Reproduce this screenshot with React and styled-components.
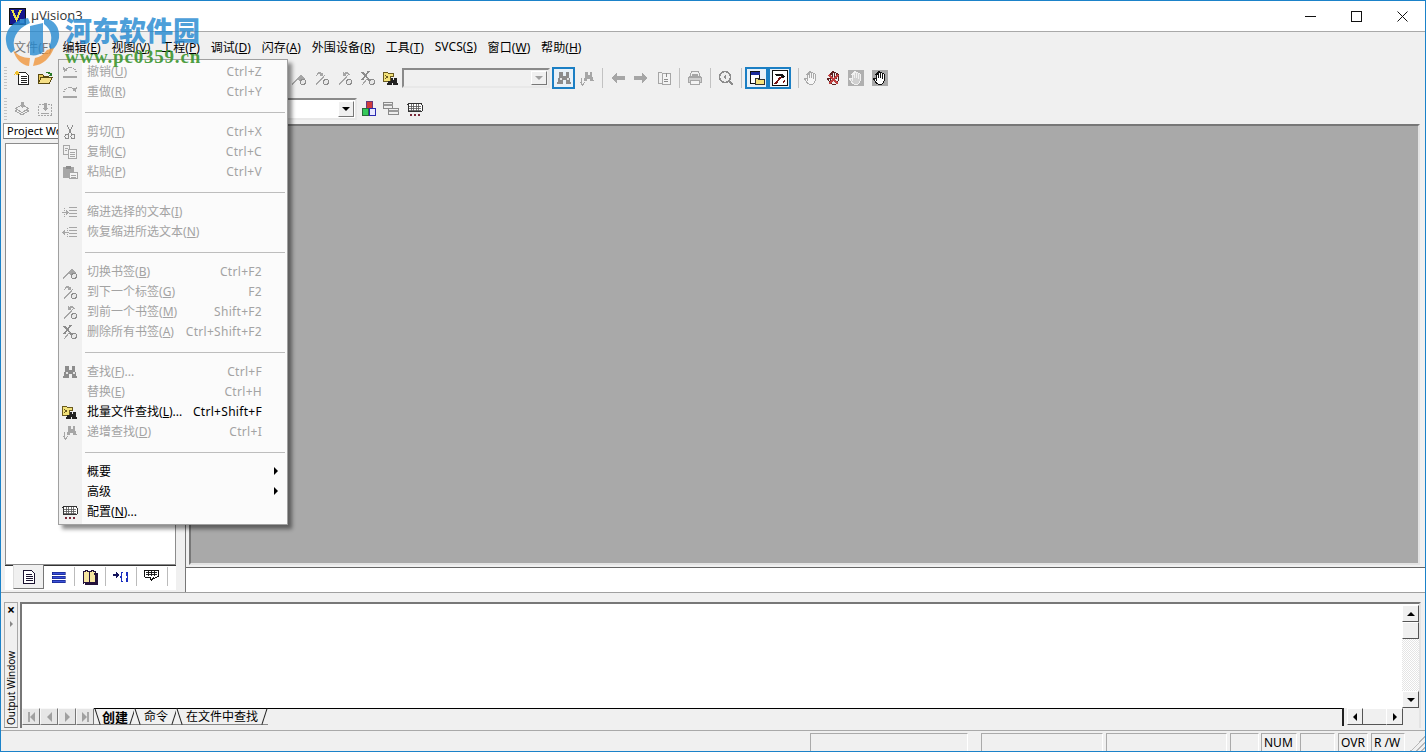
import React from "react";
import styled, { createGlobalStyle } from "styled-components";

const DIM = "#a6a6a6";
const DIM_DARK = "#8c8c8c";
const HAND = "M4 9V4.500a1 1 0 0 1 2 0V8 2.500a1 1 0 0 1 2 0V8 3a1 1 0 0 1 2 0v5.500-4.500a1 1 0 0 1 2 0v7c0 2-2 3.500-4 3.500-3 0-4-1.500-6-5-.6-1.200 1-2.200 2-.5z";

const GlobalStyle = createGlobalStyle`
  html, body { margin: 0; padding: 0; background: #f0f0f0; }
  * { box-sizing: border-box; }
  body { font-family: "Noto Sans", "Noto Sans CJK SC", sans-serif; font-size: 12px; color: #000; overflow: hidden; }
`;

/* ---------- little drawings, all on a 16x16 grid ---------- */
const GLYPHS = {
  newFile: (
    <>
      <path d="M4.500 2.500h7l2.500 2.500v9.500H4.500z" fill="#fff" stroke="#222" />
      <path d="M6.500 6.500h6M6.500 8.500h6M6.500 10.500h6M6.500 12.500h6" stroke="#222" />
      <path d="M3 0l.8 2 2-.5-1.300 1.600 1.300 1.600-2-.5-.8 2-.8-2-2 .5 1.300-1.600L.2 1.500l2 .5z" fill="#f2c230" />
    </>
  ),
  open: (
    <>
      <path d="M1.500 13.500v-9h4l1 1.500h5v2" fill="#e9c95c" stroke="#5a4a10" />
      <path d="M1.500 13.500l2.500-6h11l-2.500 6z" fill="#f5df86" stroke="#5a4a10" />
      <path d="M9 2.500c2-1.500 4-1 5 1l.8-1v3h-3l1-.8c-1-1.400-2.400-1.600-3.800-1.200z" fill="#2a7a2a" />
    </>
  ),
  stack: (
    <>
      <path d="M1.500 10l6.500-3.500 6.500 3.500-6.500 4z" fill="none" stroke={DIM} />
      <path d="M1.500 7.500l6.500-3.500 6.500 3.500-6.500 4z" fill="#f0f0f0" stroke={DIM} />
      <path d="M6.500.5h3v3h2L8 7 4.500 3.500h2z" fill={DIM} />
    </>
  ),
  boxIn: (
    <>
      <rect x="1.500" y="3.500" width="13" height="11" fill="none" stroke={DIM} strokeDasharray="2 1" />
      <path d="M6.500 1.500h3v5h2L8 10 4.500 6.500h2z" fill={DIM} />
      <path d="M4 12h8" stroke={DIM} />
    </>
  ),
  flag: (
    <>
      <path d="M1 15l9-10" stroke={DIM} strokeWidth="1.300" />
      <path d="M6 9l4-4 4 4-3 3z" fill={DIM} />
      <circle cx="12" cy="12" r="2.500" fill="#e8e8e8" stroke={DIM_DARK} />
    </>
  ),
  flagNext: (
    <>
      <path d="M2 15l9-10" stroke={DIM} strokeWidth="1.300" />
      <path d="M2 6c0-4 4-5 6-3l1-1v4H5l1.500-1.300c-1.300-1-3-.6-3.500.3z" fill={DIM} />
      <circle cx="12" cy="12" r="2.500" fill="#e8e8e8" stroke={DIM_DARK} />
    </>
  ),
  flagPrev: (
    <>
      <path d="M2 15l9-10" stroke={DIM} strokeWidth="1.300" />
      <path d="M13 6c0-4-4-5-6-3L6 2v4h4L8.500 4.700c1.300-1 3-.6 3.500.3z" fill={DIM} />
      <circle cx="12" cy="12" r="2.500" fill="#e8e8e8" stroke={DIM_DARK} />
    </>
  ),
  flagClear: (
    <>
      <path d="M2 2l8 9M9 1L2 10" stroke={DIM_DARK} strokeWidth="1.800" />
      <path d="M2 15l6-7" stroke={DIM} />
      <circle cx="12" cy="12" r="2.500" fill="#e8e8e8" stroke={DIM_DARK} />
    </>
  ),
  findFiles: (
    <>
      <path d="M.5 11V2.500h4l1 1h5v3h-3V11z" fill="#f2e27a" stroke="#6a5a20" />
      <path d="M2.500 5.500l2 1.500-2 1.500" fill="none" stroke="#6a5a20" />
      <path d="M8 7h2.500v2h1V7H14v3l1.500 5h-5l-.5-2h-.5L8 15H3.500L5 10h3z" fill="#222" transform="translate(.5 1) scale(.95)" />
    </>
  ),
  binoc: (
    <>
      <path d="M3.500 2h3v4h3V2h3l1 6 1.500 6H9.500V10h-3v4H1l1.500-6z" fill={DIM_DARK} />
      <path d="M3.500 9h2M10.500 9h2" stroke="#e4e4e4" strokeWidth="2" />
    </>
  ),
  incFind: (
    <>
      <path d="M6.500 2h2v3h2V2h2l1 5 1.500 4h-4V8.500h-3V11H4.500L6 7z" fill={DIM} />
      <path d="M2 8v4H1l2.500 3L6 12H5" fill="none" stroke={DIM} />
    </>
  ),
  arrowLeft: <path d="M1 8l6-5v3h8v4H7v3z" fill={DIM} />,
  arrowRight: <path d="M15 8L9 3v3H1v4h8v3z" fill={DIM} />,
  bookPage: (
    <>
      <path d="M2 3c2-1 3-1 4 0v11c-1-1-2-1-4 0z" fill="none" stroke={DIM} />
      <path d="M6 3h8v11H6z" fill="#f4f4f4" stroke={DIM} />
      <path d="M8 9h4M8 11h4M10 3v4" stroke={DIM_DARK} />
    </>
  ),
  printer: (
    <>
      <path d="M4.500 1.500h7l1.500 5H3z" fill="#f0f0f0" stroke={DIM} />
      <path d="M1.500 7.500h13v5h-13z" fill="#cfcfcf" stroke={DIM} />
      <path d="M3.500 10.500h9v4h-9z" fill="#f4f4f4" stroke={DIM} />
      <path d="M5 4h6M5 5.500h6" stroke={DIM} />
    </>
  ),
  zoomRun: (
    <>
      <circle cx="7" cy="7" r="5.500" fill="#eee" stroke={DIM_DARK} strokeWidth="1.500" />
      <path d="M11 11l4 4" stroke={DIM_DARK} strokeWidth="2.500" />
      <path d="M8 4L5 7l3 3z" fill={DIM_DARK} />
    </>
  ),
  project: (
    <>
      <rect x="1.500" y="1.500" width="9" height="12" fill="#fff" stroke="#111" />
      <path d="M1.500 3.500h9" stroke="#1a2a9a" strokeWidth="2.500" />
      <path d="M6 8.500h3l1 1h5v5H6z" fill="#f5e27a" stroke="#333" />
    </>
  ),
  hammer: (
    <>
      <rect x=".5" y=".5" width="15" height="15" fill="#fff" stroke="#111" />
      <path d="M3 14l6-7" stroke="#7a1212" strokeWidth="2" />
      <path d="M3 4h7l3 3-2 1-3-2H4z" fill="#111" />
      <path d="M11 13l2-3" stroke="#7a1212" />
    </>
  ),
  handIdle: <path d={HAND} fill="#f6f6f6" stroke="#aaa" />,
  handStop: (
    <>
      <path d={HAND} fill="#eee" stroke="#5a2020" />
      <path d="M3 5l9 9M12 5l-9 9" stroke="#c04040" strokeWidth="1.500" />
    </>
  ),
  handGray: (
    <>
      <rect width="16" height="16" fill="#b0b0b0" />
      <path d={HAND} fill="#d0d0d0" stroke="#f0f0f0" />
    </>
  ),
  handBlack: (
    <>
      <rect width="16" height="16" fill="#a8a8a8" />
      <path d={HAND} fill="#fff" stroke="#111" />
    </>
  ),
  blocks: (
    <>
      <rect x="5" y=".5" width="6" height="7" fill="#d13b3b" stroke="#6a3a7a" />
      <rect x="1.500" y="7.500" width="6" height="7" fill="#35c95a" stroke="#2a6a3a" />
      <rect x="8.500" y="7.500" width="6" height="7" fill="#e8e8ff" stroke="#2a2ab0" />
    </>
  ),
  windows: (
    <>
      <rect x=".5" y="1.500" width="9" height="6" fill="#eee" stroke="#8a8a8a" />
      <path d="M.5 3.500h9" stroke="#9a9a9a" strokeWidth="2" />
      <rect x="5.500" y="7.500" width="10" height="6" fill="#eee" stroke="#8a8a8a" />
      <path d="M5.500 9.500h10" stroke="#9a9a9a" strokeWidth="2" />
    </>
  ),
  keyboard: (
    <>
      <rect x="1" y="2.500" width="14" height="8" rx="1" fill="#fff" stroke="#333" />
      <path d="M2 5h12M2 7h12M2 9h12M4 3v7M6.500 3v7M9 3v7M11.500 3v7" stroke="#555" strokeWidth=".8" />
      <path d="M2.500 12.500H5v2H2.500zM6.500 12.500H9v2H6.500zM10.500 12.500H13v2h-2.500z" fill="#7a2a3a" />
    </>
  ),
  undo: (
    <>
      <path d="M3 7c1-3.500 6-4.500 9-2.500 2 1.300 2.500 3 1.500 4.500" fill="none" stroke={DIM} strokeWidth="1.200" strokeDasharray="1.500 .8" />
      <path d="M1 3l1 5 4-2z" fill={DIM} />
      <path d="M1 13h14" stroke={DIM} strokeWidth="2" />
    </>
  ),
  redo: (
    <>
      <path d="M13 7c-1-3.500-6-4.500-9-2.500C2 5.800 1.500 7.500 2.500 9" fill="none" stroke={DIM} strokeWidth="1.200" strokeDasharray="1.500 .8" />
      <path d="M15 3l-1 5-4-2z" fill={DIM} />
      <path d="M1 13h14" stroke={DIM} strokeWidth="2" />
    </>
  ),
  cut: (
    <>
      <path d="M5 1l4.500 9M11 1L6.500 10" stroke={DIM_DARK} />
      <circle cx="5" cy="12.500" r="2" fill="none" stroke={DIM_DARK} />
      <circle cx="11" cy="12.500" r="2" fill="none" stroke={DIM_DARK} />
    </>
  ),
  copy: (
    <>
      <path d="M1.500 1.500h6v9h-6z" fill="#f0f0f0" stroke={DIM} />
      <path d="M6.500 5.500h8v9h-8z" fill="#f4f4f4" stroke={DIM} />
      <path d="M3 4h3M3 6h2M8 8h5M8 10h5M8 12h5" stroke={DIM} />
    </>
  ),
  paste: (
    <>
      <path d="M1 3h11v11H1z" fill={DIM} />
      <path d="M4 2h5v3H4z" fill={DIM_DARK} />
      <path d="M7.500 8.500h8v6h-8z" fill="#f4f4f4" stroke={DIM} />
      <path d="M9 11h5M9 13h5" stroke={DIM} />
    </>
  ),
  indent: (
    <>
      <path d="M7 3h8M7 6h8M7 9h8M7 12h8" stroke={DIM} />
      <path d="M2 4v10" stroke={DIM} strokeDasharray="1 1" />
      <path d="M0 8h4V6l3 2.500L4 11V9H0z" fill={DIM} />
    </>
  ),
  outdent: (
    <>
      <path d="M7 3h8M7 6h8M7 9h8M7 12h8" stroke={DIM} />
      <path d="M5 4v10" stroke={DIM} strokeDasharray="1 1" />
      <path d="M7 8H3V6L0 8.500 3 11V9h4z" fill={DIM} />
    </>
  ),
  tabFile: (
    <>
      <path d="M2.500 1.500h8l3 3v10h-11z" fill="#fff" stroke="#1b1330" strokeWidth="1.200" />
      <path d="M4.500 5.500h6M4.500 7.500h7M4.500 9.500h7M4.500 11.500h7" stroke="#1b1330" />
    </>
  ),
  tabRegs: <path d="M1 3h13v2.500H1zM1 7h13v2.500H1zM1 11h13v2.500H1z" fill="#3c52d8" stroke="#0c1a80" strokeWidth=".6" />,
  tabBook: (
    <>
      <path d="M1.500 3c2-1.500 4-1.500 6 0v11c-2-1-4-1-6 0z" fill="#f6e5a0" stroke="#24123a" strokeWidth="1.200" />
      <path d="M7.500 3c2-1.500 4-1.500 6 0v11c-2-1-4-1-6 0z" fill="#f6e5a0" stroke="#24123a" strokeWidth="1.200" />
      <path d="M12 5h3v10H3" fill="none" stroke="#24123a" strokeWidth="1.200" />
    </>
  ),
  tabFuncs: (
    <>
      <path d="M0 5h3V2l3.500 4L3 10V7H0z" fill="#14145c" />
      <path d="M9.500 3.500h-1v3.500l-1 1 1 1v3.500h1M13 3.500h1v3.500l1 1-1 1v3.500h-1" fill="none" stroke="#1b2fc0" strokeWidth="1.300" />
    </>
  ),
  tabTemplates: (
    <>
      <path d="M.5 1.500h14v6l-5 2v-1l-2 3-1.500-3-5.500-.5z" fill="#fff" stroke="#111" />
      <path d="M2 3.500h11M2 5.500h11M4 2v5M7 2v5M10 2v5" stroke="#111" strokeWidth=".9" />
    </>
  ),
};

const Glyph = ({ name, size = 16 }) => (
  <svg width={size} height={size} viewBox="0 0 16 16" shapeRendering="crispEdges">
    {GLYPHS[name]}
  </svg>
);

/* ---------- data ---------- */
const MENUS = [
  ["文件", "F"], ["编辑", "E"], ["视图", "V"], ["工程", "P"], ["调试", "D"], ["闪存", "A"],
  ["外围设备", "R"], ["工具", "T"], ["SVCS", "S"], ["窗口", "W"], ["帮助", "H"],
];

const EDIT_MENU = [
  { icon: "undo", label: "撤销", key: "U", shortcut: "Ctrl+Z" },
  { icon: "redo", label: "重做", key: "R", shortcut: "Ctrl+Y" },
  null,
  { icon: "cut", label: "剪切", key: "T", shortcut: "Ctrl+X" },
  { icon: "copy", label: "复制", key: "C", shortcut: "Ctrl+C" },
  { icon: "paste", label: "粘贴", key: "P", shortcut: "Ctrl+V" },
  null,
  { icon: "indent", label: "缩进选择的文本", key: "I" },
  { icon: "outdent", label: "恢复缩进所选文本", key: "N" },
  null,
  { icon: "flag", label: "切换书签", key: "B", shortcut: "Ctrl+F2" },
  { icon: "flagNext", label: "到下一个标签", key: "G", shortcut: "F2" },
  { icon: "flagPrev", label: "到前一个书签", key: "M", shortcut: "Shift+F2" },
  { icon: "flagClear", label: "删除所有书签", key: "A", shortcut: "Ctrl+Shift+F2" },
  null,
  { icon: "binoc", label: "查找", key: "F", tail: "...", shortcut: "Ctrl+F" },
  { label: "替换", key: "E", shortcut: "Ctrl+H" },
  { icon: "findFiles", label: "批量文件查找", key: "L", tail: "...", shortcut: "Ctrl+Shift+F", enabled: true },
  { icon: "incFind", label: "递增查找", key: "D", shortcut: "Ctrl+I" },
  null,
  { label: "概要", enabled: true, submenu: true },
  { label: "高级", enabled: true, submenu: true },
  { icon: "keyboard", label: "配置", key: "N", tail: "...", enabled: true },
];

const STATUS_PANES = [
  { width: 158, gap: 13 }, { width: 122, gap: 3 }, { width: 121, gap: 3 }, { width: 29, gap: 2 },
  { width: 36, gap: 3, text: "NUM" }, { width: 35, gap: 3 }, { width: 30, gap: 3, text: "OVR" },
  { width: 34, gap: 0, text: "R /W" },
];

/* ---------- window chrome ---------- */
const Frame = styled.div`
  position: relative;
  width: 1426px;
  height: 752px;
  display: flex;
  flex-direction: column;
  border: 1px solid #1b82c9;
  background: #f0f0f0;
  overflow: hidden;
`;
const TitleBar = styled.div`
  height: 31px;
  flex: none;
  display: flex;
  align-items: center;
  padding-left: 8px;
  background: #fff;
  border-bottom: 1px solid #a9a9a9;
`;
const Title = styled.span`
  margin: -2px 0 0 5px;
  font-size: 13px;
  color: #333;
  font-family: "Open Sans", sans-serif;
`;
const WindowControls = styled.div`
  margin-left: auto;
  display: flex;
  align-items: center;
`;
const WindowButton = styled.div`
  width: 46px;
  height: 30px;
  display: flex;
  align-items: center;
  justify-content: center;
`;

const MenuBar = styled.div`
  height: 29px;
  flex: none;
  display: flex;
  align-items: center;
  gap: 10.8px;
  padding: 0 0 0 13px;
`;
const MenuTitle = styled.span`
  font-size: 12px;
  letter-spacing: 0.06px;
  white-space: nowrap;
  color: ${p => (p.$faded ? "#777" : "#000")};
  u { text-underline-offset: 1px; }
`;

/* ---------- toolbars ---------- */
const Toolbar = styled.div`
  height: ${p => p.$height}px;
  flex: none;
  display: flex;
  align-items: center;
  padding-left: 3px;
`;
const Grip = styled.div`
  width: 3px;
  height: 22px;
  margin: 0 3px 0 0;
  background: repeating-linear-gradient(#c4c4c4 0 1px, transparent 1px 3px);
`;
const Tool = styled.div`
  width: ${p => p.$width || 23}px;
  height: 22px;
  flex: none;
  display: flex;
  align-items: center;
  justify-content: center;
  ${p => p.$active && "border: 2px solid #1b7fc4; background: #e8f1f8;"}
`;
const ToolSep = styled.div`
  width: 1px;
  height: 20px;
  flex: none;
  background: #c2c2c2;
  margin: 0 ${p => p.$right ?? 3}px 0 ${p => p.$left ?? 4}px;
`;
const Spacer = styled.div`
  width: ${p => p.$width}px;
  flex: none;
`;
const Combo = styled.div`
  width: ${p => p.$width}px;
  height: ${p => p.$height}px;
  flex: none;
  display: flex;
  justify-content: flex-end;
  align-items: stretch;
  background: ${p => (p.$disabled ? "#f0f0f0" : "#fff")};
  border: 2px solid;
  border-color: #8a8a8a #e8e8e8 #e8e8e8 #8a8a8a;
  padding: 1px;
`;
const ComboArrow = styled.div`
  width: 16px;
  display: flex;
  align-items: center;
  justify-content: center;
  background: #f0f0f0;
  border: 1px solid;
  border-color: #fff #777 #777 #fff;
  &::before {
    content: "";
    border: 4px solid transparent;
    border-top: 4px solid ${p => (p.$disabled ? "#a0a0a0" : "#000")};
    border-bottom: 0;
    width: 0;
    height: 0;
  }
`;

/* ---------- workspace ---------- */
const Workspace = styled.div`
  height: 470px;
  flex: none;
  display: flex;
  border-bottom: 1px solid #a0a0a0;
`;
const LeftPanel = styled.div`
  width: 185px;
  flex: none;
  display: flex;
  flex-direction: column;
  padding: 0 0 2px 2px;
  border-right: 1px solid #777;
`;
const PanelTab = styled.div`
  width: 110px;
  height: 16px;
  flex: none;
  padding-left: 3px;
  line-height: 13px;
  font-size: 11px;
  border: 1px solid #999;
  border-bottom-color: #777;
  background: #fff;
  white-space: nowrap;
`;
const Tree = styled.div`
  flex: 1;
  margin: 4px 9px 0 2px;
  background: #fff;
  border: 1px solid #8c8c8c;
`;
const PanelTabs = styled.div`
  height: 25px;
  flex: none;
  margin: 0 9px 0 2px;
  padding-left: 8px;
  display: flex;
  background: #fff;
  border-top: 1px solid #333;
`;
const PanelTabItem = styled.div`
  width: 31px;
  height: ${p => (p.$active ? 24 : 19)}px;
  margin-top: ${p => (p.$active ? -1 : 1)}px;
  display: flex;
  align-items: center;
  justify-content: center;
  background: ${p => (p.$active ? "#f0f0f0" : "transparent")};
  border-right: 1px solid ${p => (p.$active ? "#777" : "#bbb")};
  border-bottom: ${p => (p.$active ? "1px solid #777" : "none")};
  ${p => p.$active && "border-left: 1px solid #ddd;"}
`;
const RightColumn = styled.div`
  flex: 1;
  display: flex;
  flex-direction: column;
  padding-top: 1px;
  min-width: 0;
`;
const MdiArea = styled.div`
  height: 441px;
  flex: none;
  margin: 0 5px 0 3px;
  background: #a9a9a9;
  border: 2px solid;
  border-color: #777 #e4e4e4 #e4e4e4 #777;
`;
const DocStrip = styled.div`
  flex: 1;
  margin-top: 2px;
  background: #fff;
  border-top: 1px solid #666;
`;

/* ---------- output window ---------- */
const Output = styled.div`
  height: 126px;
  flex: none;
  margin: 9px 4px 0 3px;
  display: flex;
  gap: 2px;
`;
const OutputHeader = styled.div`
  width: 14px;
  flex: none;
  display: flex;
  flex-direction: column;
  align-items: center;
  border: 1px solid #a8a8a8;
  border-bottom-color: #777;
  background: #f0f0f0;
`;
const HeaderClose = styled.div`
  font-size: 14px;
  font-weight: 700;
  line-height: 14px;
`;
const HeaderPin = styled.div`
  width: 0;
  height: 0;
  margin-top: 4px;
  border: 3px solid transparent;
  border-left: 3px solid #888;
  border-right: 0;
`;
const HeaderLabel = styled.div`
  margin-top: auto;
  padding-top: 2px;
  writing-mode: vertical-rl;
  transform: rotate(180deg);
  font-size: 10px;
  line-height: 12px;
  white-space: nowrap;
`;
const OutputBody = styled.div`
  flex: 1;
  min-width: 0;
  display: flex;
  flex-direction: column;
  background: #fff;
  border: 2px solid;
  border-color: #777 #e4e4e4 #e4e4e4 #777;
  border-bottom: 0;
`;
const OutputMain = styled.div`
  flex: 1;
  display: flex;
  justify-content: flex-end;
  min-height: 0;
`;
const VScroll = styled.div`
  width: 17px;
  display: flex;
  flex-direction: column;
  padding-top: 1px;
`;
const ScrollBtn = styled.div`
  width: ${p => p.$width || 17}px;
  height: ${p => p.$height || 17}px;
  flex: none;
  display: flex;
  align-items: center;
  justify-content: center;
  background: #f0f0f0;
  border: 1px solid;
  border-color: #fff #555 #555 #fff;
`;
const ScrollTrack = styled.div`
  flex: 1;
  background: repeating-conic-gradient(#e4e4e4 0 25%, #fff 0 50%) 0 0 / 2px 2px;
`;
const Arrow = styled.div`
  width: 0;
  height: 0;
  border: ${p => (p.$dim ? 5 : 4)}px solid transparent;
  ${p => p.$dir === "up" && "border-bottom-color: #000; border-top: 0;"}
  ${p => p.$dir === "down" && "border-top-color: #000; border-bottom: 0;"}
  ${p => p.$dir === "left" && "border-right-color: #000; border-left: 0;"}
  ${p => p.$dir === "right" && "border-left-color: #000; border-right: 0;"}
  ${p => p.$dim && "opacity: .3;"}
`;
const TabRow = styled.div`
  height: 20px;
  flex: none;
  display: flex;
  background: #f0f0f0;
`;
const TabNav = styled.div`
  display: flex;
  flex: none;
  background: #f0f0f0;
`;
const NavBtn = styled.div`
  width: 18px;
  height: 17px;
  display: flex;
  align-items: center;
  justify-content: center;
  background: #e6e6e6;
  border: 1px solid;
  border-color: #f8f8f8 #777 #777 #f8f8f8;
`;
const NavBar = styled.div`
  width: 2px;
  height: 10px;
  background: #a8a8a8;
`;
const TabsStrip = styled.div`
  flex: 1;
  min-width: 0;
  display: flex;
  border-top: 1px solid #000;
`;
const DocTab = styled.div`
  position: relative;
  height: 16px;
  flex: none;
  padding: 0 ${p => p.$pad}px;
  margin-right: -2px;
  line-height: 16px;
  font-size: ${p => (p.$active ? 13 : 12)}px;
  font-weight: ${p => (p.$active ? 700 : 400)};
  background: #f0f0f0;
  border-bottom: 1px solid #888;
  &::before, &::after {
    content: "";
    position: absolute;
    top: -1px;
    bottom: -1px;
    width: 1px;
    background: #222;
  }
  &::before { left: 3px; transform: rotate(-18deg); }
  &::after { right: 3px; transform: rotate(18deg); }
`;
const HScrollArea = styled.div`
  width: 77px;
  height: 18px;
  flex: none;
  display: flex;
  align-items: stretch;
  padding-left: 3px;
  border-left: 2px solid #222;
`;
const HThumb = styled.div`
  width: 23px;
  height: 17px;
  background: #f0f0f0;
  border-top: 1px solid #fff;
  border-bottom: 1px solid #555;
`;

/* ---------- status bar ---------- */
const StatusBar = styled.div`
  flex: 1;
  margin-top: 2px;
  display: flex;
  align-items: flex-end;
  padding-left: 809px;
  border-top: 1px solid #a9a9a9;
`;
const StatusPane = styled.div`
  width: ${p => p.$width}px;
  height: 18px;
  flex: none;
  margin-right: ${p => p.$gap}px;
  padding-left: 2px;
  line-height: 18px;
  font-size: 12px;
  white-space: nowrap;
  border-top: 1px solid #aaa;
  border-left: 1px solid #aaa;
  border-right: 1px solid #fff;
`;
const Grippy = styled.div`
  margin-left: auto;
  width: 15px;
  height: 15px;
  background: linear-gradient(135deg, transparent 50%, #b8b8b8 50%, #b8b8b8 56%, transparent 56%, transparent 68%, #b8b8b8 68%, #b8b8b8 74%, transparent 74%, transparent 86%, #b8b8b8 86%, #b8b8b8 92%, transparent 92%);
`;

/* ---------- dropdown menu, over the page ---------- */
const Dropdown = styled.div`
  position: absolute;
  left: 57px;
  top: 58px;
  width: 230px;
  padding: 2px 0;
  z-index: 3;
  background: linear-gradient(90deg, #f0f0f0 23px, #fbfbfb 23px);
  border: 1px solid #a0a0a0;
  box-shadow: 4px 4px 4px rgba(0, 0, 0, 0.45);
`;
const MenuRow = styled.div`
  height: 20px;
  display: flex;
  align-items: center;
  color: ${p => (p.$enabled ? "#000" : "#a3a3a3")};
  font-size: 12px;
  white-space: nowrap;
`;
const MenuIcon = styled.div`
  width: 23px;
  height: 20px;
  flex: none;
  margin-left: 3px;
  display: flex;
  align-items: center;
`;
const MenuLabel = styled.span`
  margin: -2px 0 0 2px;
  u { text-underline-offset: 1px; }
`;
const MenuShortcut = styled.span`
  margin: -2px 0 0 auto;
  padding-right: 25px;
  letter-spacing: 0.3px;
`;
const SubArrow = styled.div`
  margin: -2px 9px 0 auto;
  width: 0;
  height: 0;
  border: 4px solid transparent;
  border-left: 4px solid #000;
  border-right: 0;
`;
const MenuSep = styled.div`
  height: 20px;
  display: flex;
  align-items: center;
  padding: 0 2px 0 26px;
  &::after {
    content: "";
    flex: 1;
    height: 1px;
    background: #bdbdbd;
  }
`;

/* ---------- watermark, over the page ---------- */
const Watermark = styled.div`
  position: absolute;
  left: 3px;
  top: 13px;
  z-index: 5;
  pointer-events: none;
`;
const WatermarkLogo = styled.svg`
  position: absolute;
  left: 0;
  top: 0;
`;
const WatermarkName = styled.div`
  position: absolute;
  left: 61px;
  top: 0;
  width: 140px;
  font-family: "Noto Sans CJK SC", sans-serif;
  font-weight: 900;
  font-size: 27px;
  line-height: 32px;
  color: rgba(36, 137, 209, 0.82);
  white-space: nowrap;
`;
const WatermarkUrl = styled.div`
  position: absolute;
  left: 61px;
  top: 34px;
  font-family: "Liberation Serif", serif;
  font-weight: 700;
  font-size: 19px;
  line-height: 18px;
  letter-spacing: 0.8px;
  color: rgba(62, 150, 48, 0.92);
  white-space: nowrap;
`;

const App = () => (
  <Frame>
    <GlobalStyle />
    <TitleBar>
      <svg width="17" height="17" viewBox="0 0 16 16" shapeRendering="crispEdges">
        <rect x=".5" y=".5" width="15" height="15" fill="#16168c" stroke="#111" />
        <path d="M3 2l4 9 4-9" fill="none" stroke="#efe34a" strokeWidth="2" />
        <path d="M10 10h4v4h-4z" fill="#6a8ac8" />
      </svg>
      <Title>µVision3</Title>
      <WindowControls>
        <WindowButton>
          <svg width="11" height="11"><path d="M0 5.500h11" stroke="#111" /></svg>
        </WindowButton>
        <WindowButton>
          <svg width="11" height="11"><rect x=".5" y=".5" width="10" height="10" fill="none" stroke="#111" /></svg>
        </WindowButton>
        <WindowButton>
          <svg width="11" height="11"><path d="M.5.5l10 10M10.500.5l-10 10" stroke="#111" /></svg>
        </WindowButton>
      </WindowControls>
    </TitleBar>

    <MenuBar>
      {MENUS.map(([label, key], i) => (
        <MenuTitle key={label} $faded={i === 0}>
          {label}(<u>{key}</u>)
        </MenuTitle>
      ))}
    </MenuBar>

    <Toolbar $height={33}>
      <Grip />
      <Tool><Glyph name="newFile" /></Tool>
      <Tool><Glyph name="open" /></Tool>
      <Spacer $width={231} />
      <Tool><Glyph name="flag" /></Tool>
      <Tool><Glyph name="flagNext" /></Tool>
      <Tool><Glyph name="flagPrev" /></Tool>
      <Tool><Glyph name="flagClear" /></Tool>
      <Tool><Glyph name="findFiles" /></Tool>
      <Combo $width={148} $height={20} $disabled><ComboArrow $disabled /></Combo>
      <Spacer $width={2} />
      <Tool $active><Glyph name="binoc" /></Tool>
      <Tool><Glyph name="incFind" /></Tool>
      <ToolSep />
      <Tool><Glyph name="arrowLeft" /></Tool>
      <Tool><Glyph name="arrowRight" /></Tool>
      <Tool><Glyph name="bookPage" /></Tool>
      <ToolSep />
      <Tool><Glyph name="printer" /></Tool>
      <ToolSep />
      <Tool><Glyph name="zoomRun" /></Tool>
      <ToolSep />
      <Tool $active><Glyph name="project" /></Tool>
      <Tool $active><Glyph name="hammer" /></Tool>
      <ToolSep $left={7} $right={0} />
      <Tool><Glyph name="handIdle" /></Tool>
      <Tool><Glyph name="handStop" /></Tool>
      <Tool $width={22}><Glyph name="handGray" /></Tool>
      <Tool $width={25}><Glyph name="handBlack" /></Tool>
    </Toolbar>

    <Toolbar $height={29}>
      <Grip />
      <Tool><Glyph name="stack" /></Tool>
      <Tool><Glyph name="boxIn" /></Tool>
      <Spacer $width={161} />
      <Combo $width={140} $height={22}><ComboArrow /></Combo>
      <Tool><Glyph name="blocks" /></Tool>
      <Tool $width={22}><Glyph name="windows" /></Tool>
      <Tool $width={25}><Glyph name="keyboard" /></Tool>
    </Toolbar>

    <Workspace>
      <LeftPanel>
        <PanelTab>Project Workspace</PanelTab>
        <Tree />
        <PanelTabs>
          <PanelTabItem $active><Glyph name="tabFile" /></PanelTabItem>
          <PanelTabItem><Glyph name="tabRegs" /></PanelTabItem>
          <PanelTabItem><Glyph name="tabBook" /></PanelTabItem>
          <PanelTabItem><Glyph name="tabFuncs" /></PanelTabItem>
          <PanelTabItem><Glyph name="tabTemplates" /></PanelTabItem>
        </PanelTabs>
      </LeftPanel>
      <RightColumn>
        <MdiArea />
        <DocStrip />
      </RightColumn>
    </Workspace>

    <Output>
      <OutputHeader>
        <HeaderClose>×</HeaderClose>
        <HeaderPin />
        <HeaderLabel>Output Window</HeaderLabel>
      </OutputHeader>
      <OutputBody>
        <OutputMain>
          <VScroll>
            <ScrollBtn><Arrow $dir="up" /></ScrollBtn>
            <ScrollBtn />
            <ScrollTrack />
            <ScrollBtn><Arrow $dir="down" /></ScrollBtn>
          </VScroll>
        </OutputMain>
        <TabRow>
          <TabNav>
            <NavBtn><NavBar /><Arrow $dir="left" $dim /></NavBtn>
            <NavBtn><Arrow $dir="left" $dim /></NavBtn>
            <NavBtn><Arrow $dir="right" $dim /></NavBtn>
            <NavBtn><Arrow $dir="right" $dim /><NavBar /></NavBtn>
          </TabNav>
          <TabsStrip>
            <DocTab $active $pad={8}>创建</DocTab>
            <DocTab $pad={10}>命令</DocTab>
            <DocTab $pad={10}>在文件中查找</DocTab>
          </TabsStrip>
          <HScrollArea>
            <ScrollBtn $width={16}><Arrow $dir="left" /></ScrollBtn>
            <HThumb />
            <ScrollBtn $width={17}><Arrow $dir="right" /></ScrollBtn>
          </HScrollArea>
        </TabRow>
      </OutputBody>
    </Output>

    <StatusBar>
      {STATUS_PANES.map((pane, i) => (
        <StatusPane key={i} $width={pane.width} $gap={pane.gap}>{pane.text}</StatusPane>
      ))}
      <Grippy />
    </StatusBar>

    <Dropdown>
      {EDIT_MENU.map((item, i) =>
        item ? (
          <MenuRow key={i} $enabled={item.enabled}>
            <MenuIcon>{item.icon && <Glyph name={item.icon} />}</MenuIcon>
            <MenuLabel>
              {item.label}
              {item.key && <>(<u>{item.key}</u>)</>}
              {item.tail}
            </MenuLabel>
            {item.shortcut && <MenuShortcut>{item.shortcut}</MenuShortcut>}
            {item.submenu && <SubArrow />}
          </MenuRow>
        ) : (
          <MenuSep key={i} />
        )
      )}
    </Dropdown>

    <Watermark>
      <WatermarkLogo width="60" height="56" viewBox="0 0 60 56">
        <path d="M24 4C10 6 1 15 2 27c.4 5 2 9 5 12l4-3c-4-10 1-21 15-27z" fill="rgba(36,137,209,.8)" />
        <path d="M26 12l13-3v29c-4 3-8 4-13 3z" fill="rgba(36,137,209,.78)" />
        <path d="M40 4c11 2 16 10 15 20-1 5-3 9-7 12l-3-3c4-8 3-17-5-23z" fill="rgba(36,137,209,.8)" />
        <path d="M9 36c4 5 10 8 17 8l-1 8C17 51 12 45 9 36z" fill="rgba(240,150,60,.8)" />
        <path d="M50 34c-4 10-11 17-21 18l2-8c5-1 9-4 12-8z" fill="rgba(240,150,60,.8)" />
      </WatermarkLogo>
      <WatermarkName>河东软件园</WatermarkName>
      <WatermarkUrl>www.pc0359.cn</WatermarkUrl>
    </Watermark>
  </Frame>
);

export default App;
